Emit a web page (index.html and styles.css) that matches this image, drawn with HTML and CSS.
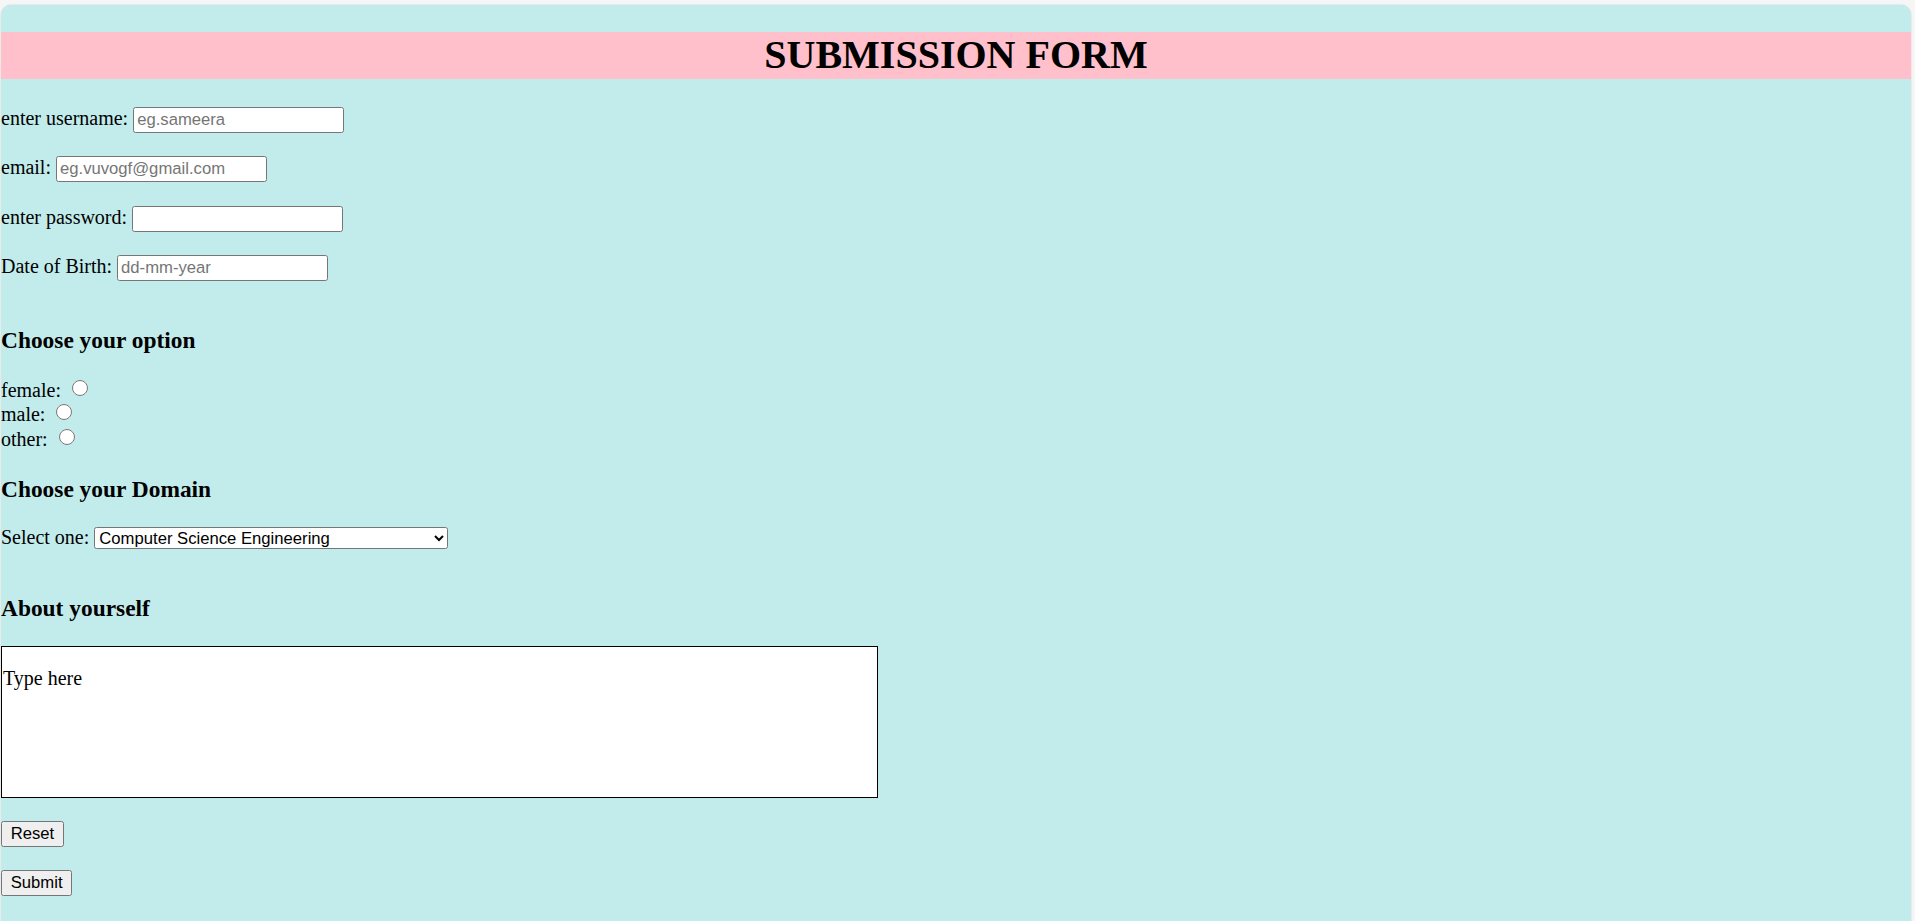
FILE: index.html
```html
<!DOCTYPE html>
<html lang="en">
<head>
<meta charset="utf-8">
<title>Submission Form</title>
<link rel="stylesheet" href="styles.css">
</head>
<body>
<div class="panel">
  <h1 class="title">SUBMISSION FORM</h1>
  <form class="form">
    <div class="row row-first">enter username: <input class="field" type="text" placeholder="eg.sameera"></div>
    <div class="row">email: <input class="field" type="email" placeholder="eg.vuvogf@gmail.com"></div>
    <div class="row">enter password: <input class="field" type="password"></div>
    <div class="row">Date of Birth: <input class="field" type="text" placeholder="dd-mm-year"></div>

    <h3 class="section section-option">Choose your option</h3>
    <div class="radios">
      <div class="radio-row">female: <input class="radio" type="radio" name="gender"></div>
      <div class="radio-row">male: <input class="radio" type="radio" name="gender"></div>
      <div class="radio-row">other: <input class="radio" type="radio" name="gender"></div>
    </div>

    <h3 class="section section-domain">Choose your Domain</h3>
    <div class="row row-select">Select one: <select class="select">
        <option>Computer Science Engineering</option>
        <option>Electronics Engineering</option>
        <option>Mechanical Engineering</option>
        <option>Civil Engineering</option>
      </select></div>

    <h3 class="section section-about">About yourself</h3>
    <textarea class="about">

Type here</textarea>

    <div class="btn-row btn-row-reset"><button class="btn" type="reset">Reset</button></div>
    <div class="btn-row btn-row-submit"><button class="btn" type="submit">Submit</button></div>
  </form>
</div>
</body>
</html>
```

FILE: styles.css
```css
html {
  background: #f6f6f6;
  overflow: hidden;
}

body {
  margin: 0;
  overflow: hidden;
  font-family: "Liberation Serif", "Times New Roman", serif;
  font-size: 20px;
  color: #000;
}

.panel {
  display: flow-root;
  margin: 5px 4px 0 1px;
  padding-bottom: 60px;
  background: #c2ecec;
  border-radius: 10px 10px 0 0;
  box-shadow: 0 0 2px rgba(0, 0, 0, 0.18);
}

.title {
  margin: 27px 0 0;
  height: 46.5px;
  line-height: 46.5px;
  font-size: 40px;
  font-weight: bold;
  text-align: center;
  background: #ffc0cb;
}

.form {
  margin: 26.5px 0 0;
  padding: 0;
}

.row {
  height: 26px;
  line-height: 26px;
  margin-top: 23.3px;
  white-space: nowrap;
}

.row-first {
  margin-top: 0;
}

.field {
  box-sizing: border-box;
  width: 211px;
  height: 26px;
  margin: 0;
  padding: 0 3px;
  border: 1px solid #767676;
  border-radius: 2.5px;
  background: #fff;
  font-family: "Liberation Sans", Arial, sans-serif;
  font-size: 16.67px;
  color: #000;
  vertical-align: baseline;
}

.field::placeholder {
  color: #757575;
}

.section {
  margin: 0;
  height: 27px;
  line-height: 27px;
  font-size: 23.4px;
  font-weight: bold;
}

.section-option {
  margin-top: 47.7px;
}

.radios {
  margin-top: 24.3px;
}

.radio-row {
  height: 24.4px;
  line-height: 24.4px;
  white-space: nowrap;
}

.radio {
  width: 16px;
  height: 16px;
  margin: 0 3px 0 6px;
  vertical-align: 1px;
}

.section-domain {
  margin-top: 24.5px;
}

.row-select {
  margin-top: 21.3px;
}

.select {
  box-sizing: border-box;
  width: 354px;
  height: 22px;
  margin: 0;
  font-family: "Liberation Sans", Arial, sans-serif;
  font-size: 16.67px;
  color: #000;
  background: #fff;
  border: 1px solid #767676;
  border-radius: 2.5px;
  vertical-align: baseline;
}

.section-about {
  margin-top: 45.2px;
}

.about {
  display: block;
  box-sizing: border-box;
  width: 877px;
  height: 152px;
  margin: 23.8px 0 0;
  padding: 0 1px;
  border: 1px solid #000;
  background: #fff;
  font-family: "Liberation Serif", "Times New Roman", serif;
  font-size: 20px;
  line-height: 21.5px;
  color: #000;
  resize: none;
}

.btn-row {
  height: 25px;
}

.btn-row-reset {
  margin-top: 23.3px;
}

.btn-row-submit {
  margin-top: 24px;
}

.btn {
  box-sizing: border-box;
  height: 25.5px;
  margin: 0;
  padding: 0 8.7px;
  border: 1px solid #767676;
  border-radius: 2.5px;
  background: #efefef;
  font-family: "Liberation Sans", Arial, sans-serif;
  font-size: 16.67px;
  color: #000;
}
```
